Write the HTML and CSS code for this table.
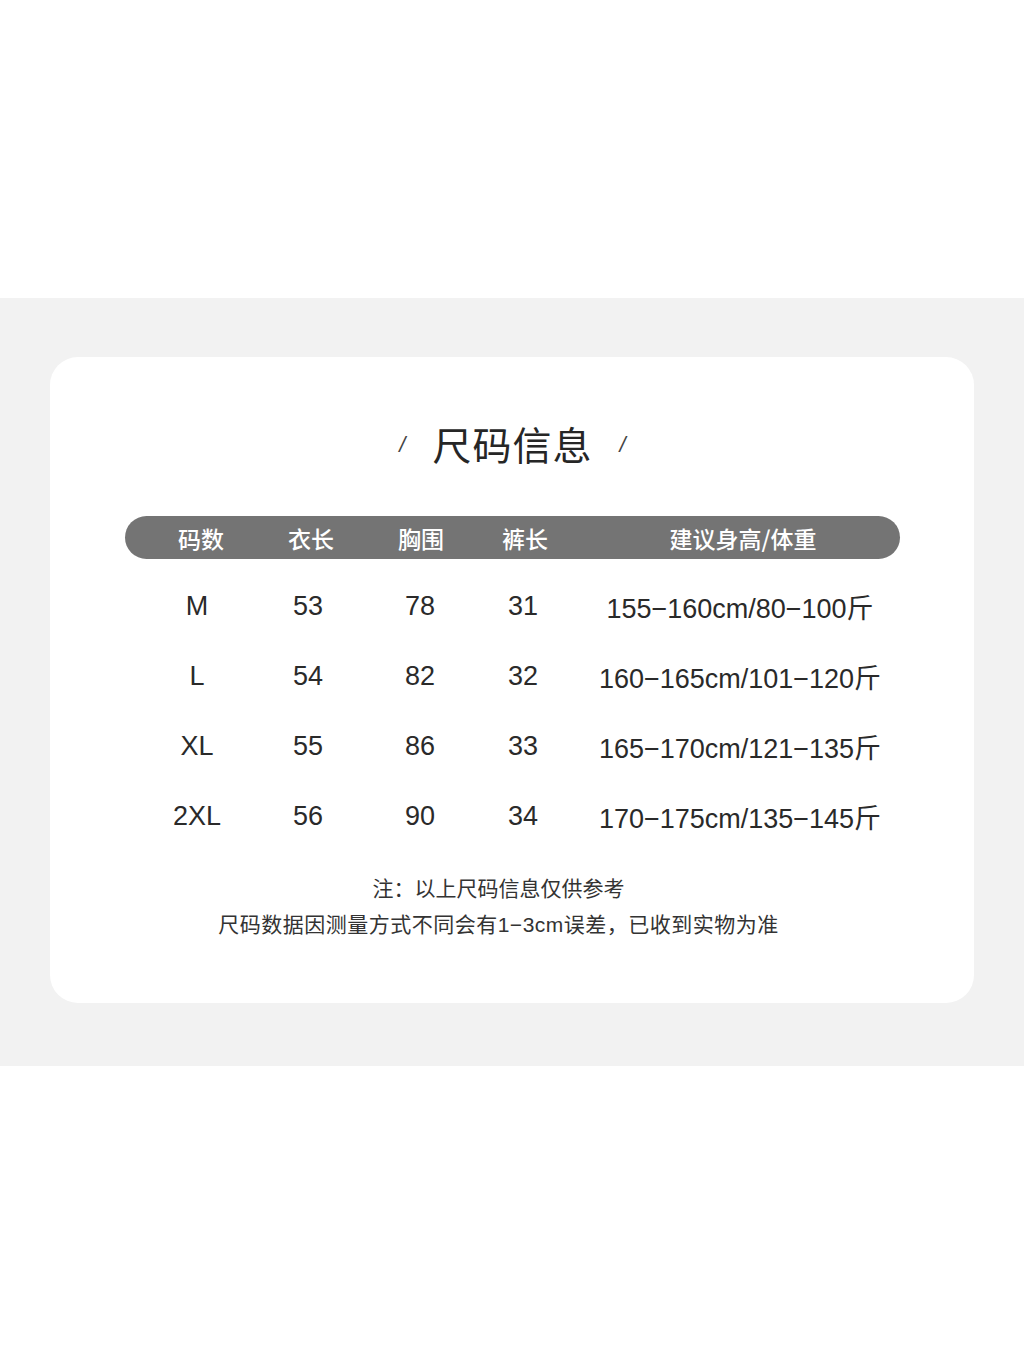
FILE: index.html
```html
<!DOCTYPE html>
<html lang="zh">
<head>
<meta charset="utf-8">
<title>尺码信息</title>
<link rel="stylesheet" href="styles.css">
</head>
<body>
<div class="band">
  <div class="card">
    <h1 class="title"><span class="slash">/</span><span class="title-text">尺码信息</span><span class="slash">/</span></h1>
    <div class="grid head">
      <div>码数</div><div>衣长</div><div>胸围</div><div>裤长</div><div>建议身高/体重</div>
    </div>
    <div class="grid row"><div>M</div><div>53</div><div>78</div><div>31</div><div>155−160cm/80−100斤</div></div>
    <div class="grid row"><div>L</div><div>54</div><div>82</div><div>32</div><div>160−165cm/101−120斤</div></div>
    <div class="grid row"><div>XL</div><div>55</div><div>86</div><div>33</div><div>165−170cm/121−135斤</div></div>
    <div class="grid row"><div>2XL</div><div>56</div><div>90</div><div>34</div><div>170−175cm/135−145斤</div></div>
    <div class="notes">
      <p>注：以上尺码信息仅供参考</p>
      <p class="wide">尺码数据因测量方式不同会有1−3cm误差，已收到实物为准</p>
    </div>
  </div>
</div>
</body>
</html>
```
FILE: styles.css
```css
html, body {
  margin: 0;
  padding: 0;
  background: #ffffff;
}
body {
  font-family: "Liberation Sans", "Noto Sans CJK SC", sans-serif;
  color: #2a2a2a;
}
.band {
  margin-top: 298px;
  height: 768px;
  box-sizing: border-box;
  background: #f2f2f2;
  padding: 59px 50px;
}
.card {
  height: 646px;
  box-sizing: border-box;
  background: #ffffff;
  border-radius: 28px;
  padding: 56px 74px 0 75px;
}
.title {
  margin: 0;
  height: 60px;
  display: flex;
  justify-content: center;
  align-items: center;
  font-weight: normal;
  gap: 27px;
}
.title-text {
  font-family: "Noto Sans CJK SC", sans-serif;
  font-size: 39px;
  letter-spacing: 1px;
  color: #262626;
  font-weight: 400;
}
.slash {
  font-size: 22px;
  color: #444;
  padding-top: 4px;
  font-style: italic;
}
.grid {
  display: grid;
  justify-items: center;
  align-items: center;
  white-space: nowrap;
}
.head {
  grid-template-columns: 110px 110px 110px 98px 338px;
  padding-left: 21px;
  margin-top: 43px;
  height: 43px;
  background: #747474;
  border-radius: 22px;
  color: #ffffff;
  font-family: "Noto Sans CJK SC", sans-serif;
  font-size: 23px;
  font-weight: 500;
}
.head div { padding-top: 1px; }
.row {
  grid-template-columns: 110px 112px 112px 94px 340px;
  padding-left: 17px;
  height: 70px;
  font-size: 27px;
  color: #2a2a2a;
}
.head + .row { margin-top: 12px; }
.notes {
  margin-top: 20px;
  padding-right: 28px;
  text-align: center;
  font-family: "Liberation Sans", "Noto Sans CJK SC", sans-serif;
  font-size: 21px;
  color: #333;
}
.notes p {
  margin: 0;
  line-height: 36px;
}
.notes .wide {
  letter-spacing: 0.5px;
}
```
